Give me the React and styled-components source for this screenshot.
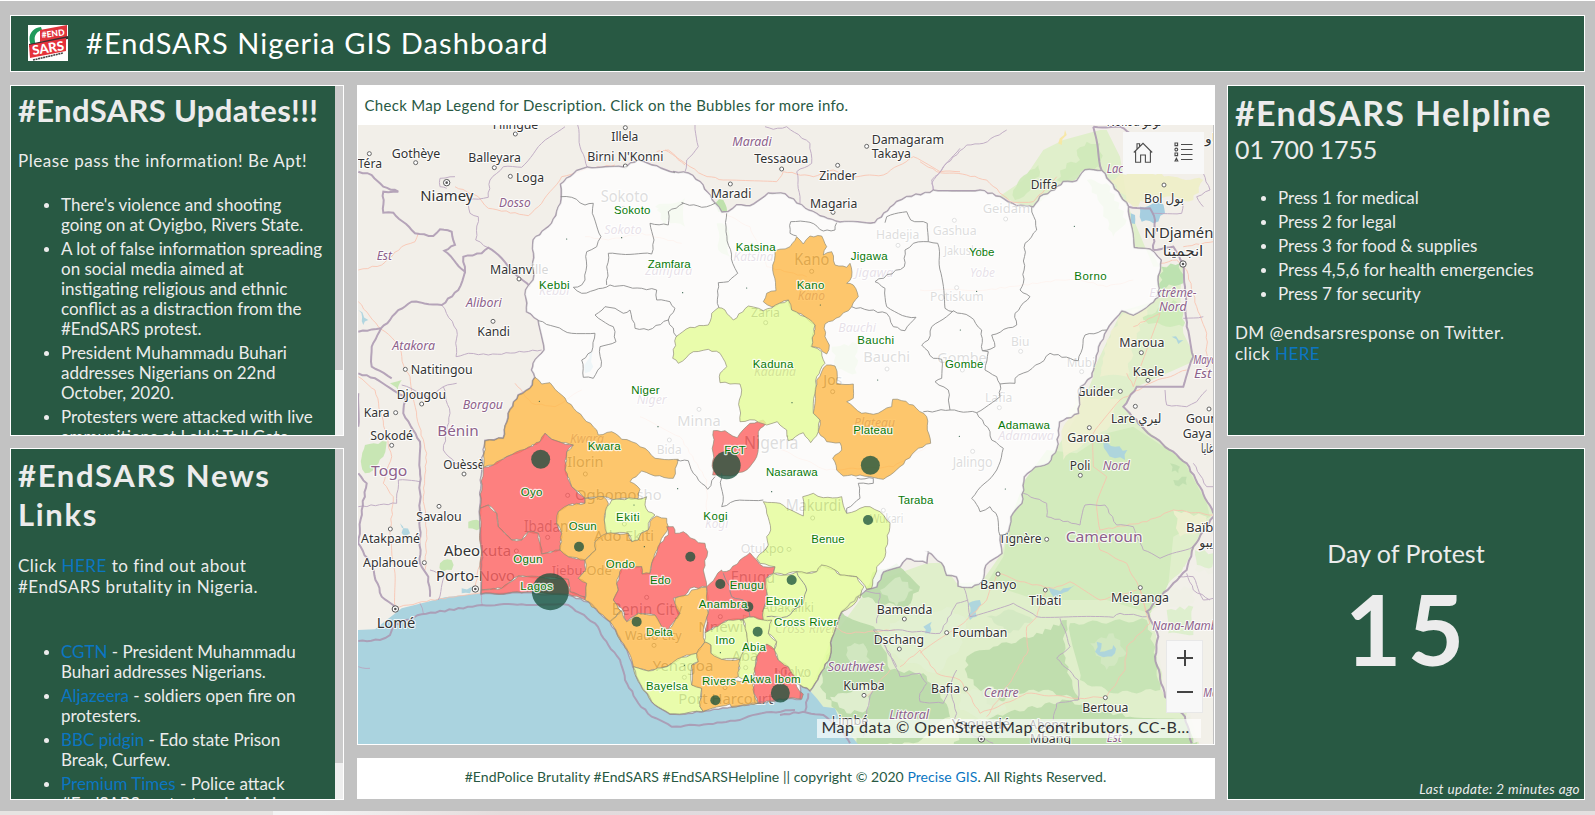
import React from "react";
import styled, { createGlobalStyle } from "styled-components";

const GlobalStyle = createGlobalStyle`
  *, *::before, *::after { box-sizing: border-box; }
  body { margin: 0; background: #c2c2c2; font-family: Lato, sans-serif; color: #ececec; }
`;

/* ---------- page frame ---------- */
const Page = styled.div`
  height: 815px;
  overflow: hidden;
  display: flex;
  flex-direction: column;
  gap: 13px;
  padding: 14px 10px 0;
  border-top: 1px solid #fff;
  background: #c2c2c2;
`;
const Header = styled.header`
  flex: 0 0 57px;
  display: flex;
  align-items: center;
  gap: 18px;
  padding: 0 0 2px 17px;
  background: #285943;
  border: 1px solid #fff;
`;
const Title = styled.h1`
  margin: 0;
  font-size: 29px;
  line-height: 36px;
  font-weight: 400;
  letter-spacing: 1.06px;
  color: #fff;
`;
const Columns = styled.main`
  display: grid;
  grid-template-columns: 334px 858px 358px;
  column-gap: 12.5px;
  height: 715px;
`;
const Column = styled.div`
  display: flex;
  flex-direction: column;
  gap: ${(p) => p.$gap || 12}px;
`;
const Panel = styled.section`
  flex: 0 0 ${(p) => p.$h}px;
  display: flex;
  overflow: hidden;
  background: #285943;
  border: 1px solid #fff;
`;
const Scroller = styled.div`
  flex: 1;
  min-width: 0;
  overflow: hidden;
  white-space: nowrap;
  padding: ${(p) => p.$top}px 0 0 7px;
`;
const Track = styled.div`
  flex: 0 0 8px;
  background: #eee;
`;
const Thumb = styled.div`
  height: ${(p) => p.$h}px;
  background: #cbcbcb;
`;
const Heading = styled.h2`
  margin: 0;
  font-size: ${(p) => p.$size || 31}px;
  line-height: ${(p) => p.$line || 38}px;
  letter-spacing: ${(p) => p.$track || 0}px;
  font-weight: 700;
  color: #ececec;
`;
const Phone = styled.div`
  margin-top: 1px;
  font-size: 25px;
  line-height: 30px;
  letter-spacing: -0.1px;
`;
const Text = styled.p`
  margin: ${(p) => p.$gap}px 0 0;
  font-size: 17px;
  line-height: 21px;
  letter-spacing: ${(p) => p.$track || 0.5}px;
`;
const List = styled.ul`
  margin: ${(p) => p.$gap}px 0 0;
  padding: 0 0 0 43px;
  list-style: none;
`;
const Item = styled.li`
  position: relative;
  margin-bottom: 4px;
  font-size: 17px;
  line-height: 20px;
  &::before {
    content: "";
    position: absolute;
    left: -17px;
    top: 8px;
    width: 5px;
    height: 5px;
    border-radius: 50%;
    background: #ececec;
  }
`;
const Link = styled.a`
  color: #0b76c2;
`;

/* ---------- counter ---------- */
const Counter = styled.div`
  flex: 1;
  display: flex;
  flex-direction: column;
  align-items: center;
  padding: 89px 0 1px;
`;
const CounterLabel = styled.div`
  font-size: 25px;
  line-height: 30px;
`;
const CounterValue = styled.div`
  margin-top: 12px;
  padding-left: 3px;
  font-size: 98px;
  line-height: 96px;
  font-weight: 700;
  letter-spacing: 6px;
`;
const Updated = styled.div`
  margin-top: auto;
  align-self: flex-end;
  padding-right: 4px;
  font-size: 13.5px;
  line-height: 18px;
  font-style: italic;
  letter-spacing: 0.36px;
`;

/* ---------- map card ---------- */
const MapCard = styled.section`
  flex: 0 0 660px;
  display: flex;
  flex-direction: column;
  background: #fff;
  padding: 0 1px 1px;
`;
const MapCaption = styled.div`
  flex: 0 0 40px;
  padding: 11px 0 0 7px;
  font-size: 15px;
  line-height: 18px;
  letter-spacing: 0.3px;
  color: #285943;
`;
const MapView = styled.div`
  position: relative;
  flex: 1;
  overflow: hidden;
  border-right: 1px solid #c2c2c2;
`;
const Tools = styled.div`
  position: absolute;
  top: 7px;
  right: 9px;
  width: 81px;
  height: 42px;
  display: flex;
  padding-bottom: 2px;
  background: #f8f8f8;
`;
const Zoom = styled.div`
  position: absolute;
  top: 515px;
  right: 10px;
  width: 37px;
  height: 73px;
  display: flex;
  flex-direction: column;
  padding: 0 0 2px 1px;
  background: #f8f8f8;
  border: 1px solid #e8e8e8;
`;
const ToolButton = styled.button`
  flex: 1;
  display: flex;
  align-items: center;
  justify-content: center;
  padding: 0;
  border: 0;
  background: none;
`;
const Attribution = styled.div`
  position: absolute;
  left: 459px;
  top: 594px;
  width: 384px;
  height: 19px;
  padding-left: 5px;
  font-size: 16px;
  line-height: 16px;
  letter-spacing: 0.47px;
  white-space: nowrap;
  color: #323232;
  background: rgba(255, 255, 255, 0.67);
`;
const FooterCard = styled.footer`
  flex: 0 0 41px;
  text-align: center;
  background: #fff;
  font-size: 14px;
  line-height: 38px;
  letter-spacing: 0.06px;
  color: #285943;
`;
const TaskStrip = styled.div`
  flex: 0 0 4px;
  margin: -2px -10px 0;
  background: linear-gradient(90deg, #e6e4e2 0 273px, #f3f3f3 273px 318px, #e4dcdc 500px, #d6d8e2 1100px, #e4e0e0);
`;
const Drawing = styled.svg`
  display: block;
`;

/* ---------- map geometry: survey sheets at 3 units per pixel ---------- */
const SHEETS = {
  A: [355, 80], B: [640, 80], C: [920, 80],
  D: [355, 370], E: [640, 370], F: [920, 370],
  G: [355, 570], H: [780, 570],
};
const px = (sheet, u, v) => [SHEETS[sheet][0] + u / 3, SHEETS[sheet][1] + v / 3];

function trace(text, close) {
  let sheet = "A";
  const out = [];
  text.trim().split(/\s+/).forEach((token) => {
    if (SHEETS[token]) { sheet = token; return; }
    const [u, v] = token.split(",").map(Number);
    const [x, y] = px(sheet, u, v);
    out.push(`${x.toFixed(1)},${y.toFixed(1)}`);
  });
  return "M" + out.join("L") + (close ? "Z" : "");
}

/* adds small alternating kinks so that surveyed borders do not look ruled */
function rough(text, close, amount = 0.9) {
  const pts = trace(text, false).slice(1).split("L").map((p) => p.split(",").map(Number));
  if (close) pts.push(pts[0]);
  let d = `M${pts[0]}`;
  for (let i = 1; i < pts.length; i++) {
    const [ax, ay] = pts[i - 1];
    const [bx, by] = pts[i];
    const len = Math.hypot(bx - ax, by - ay);
    const n = Math.max(1, Math.round(len / 4.5));
    for (let k = 1; k < n; k++) {
      const t = k / n;
      const x = ax + (bx - ax) * t;
      const y = ay + (by - ay) * t;
      const j = Math.sin(x * 2.7 + y * 3.9) * amount;
      d += `L${(x - ((by - ay) / len) * j).toFixed(1)},${(y + ((bx - ax) / len) * j).toFixed(1)}`;
    }
    d += `L${bx},${by}`;
  }
  return d + (close ? "Z" : "");
}

const NIGERIA = `A 617,313 665,272 697,262 805,262 850,240 905,258 960,278 B 100,275 145,280 180,305 225,370 245,397 265,395 290,375 330,378 385,340 435,342 495,385 540,408 600,427 705,428 770,365 800,350 870,338
C 40,331 180,331 240,350 290,378 340,382 360,350 405,330 430,305 470,303 495,270 545,272 625,380 642,503 690,508 723,540 713,600 716,650 690,672 640,705 605,692 560,750 535,800 520,870
F 515,20 480,50 475,130 418,155 410,235 385,280 345,290 312,320 305,400 272,440 265,485 240,497 245,550 197,585 185,635 155,652 115,648 110,620 80,615 65,578 23,545
E 865,545 860,578 800,565 780,590 730,605 710,650 680,658 H 240,75 185,125 155,205 150,260 105,340 90,362 60,345 60,388 G 1300,385 1205,400 1130,410 1050,422 1000,430 945,432 890,395 850,330 820,250 795,205 765,155 700,95 640,75 500,68 378,72
D 378,600 382,550 375,410 380,290 390,212 445,205 460,130 490,75 525,55 540,22 530,0 A 535,850 568,810 550,720 515,695 512,630 535,600 535,480 590,430 617,370`;

const STATES = [
  ["orange", `D 390,212 445,205 460,130 490,75 525,55 540,22 560,42 585,38 620,75 665,125 725,180 730,195 770,185 800,208 830,215 870,235 900,265 970,268 955,325 900,318 860,303 825,335 855,358 850,385 770,388 745,380 690,385 650,350 630,300 635,245 655,225 620,218 590,208 570,190 555,215 510,238 455,260 415,285 385,292`],
  ["red", `D 385,292 415,285 455,260 510,238 555,215 570,190 590,208 620,218 655,225 635,245 630,300 650,350 690,385 690,400 640,405 610,425 605,460 620,490 615,540 560,552 550,490 520,485 500,510 470,510 430,470 425,430 400,405 375,415`],
  ["red", `D 375,415 400,405 425,430 430,470 470,510 500,510 520,485 550,490 560,552 615,540 640,560 690,570 692,600 670,625 695,640 690,685 645,665 640,628 490,618 460,640 440,655 378,660`],
  ["red", `D 378,660 440,655 460,640 490,618 640,628 645,665 690,680 690,690 640,672 500,668 378,672`],
  ["orange", `D 690,385 745,380 760,400 748,450 755,490 720,515 722,540 690,570 640,560 615,540 620,490 605,460 610,425 640,405 690,400`],
  ["lime", `D 770,390 835,385 850,387 875,380 870,405 880,425 900,435 880,460 880,480 858,490 850,510 830,515 820,490 755,490 748,450 755,410`],
  ["orange", `D 755,490 820,490 830,515 850,510 858,490 880,480 885,455 905,438 935,445 940,470 915,520 890,580 885,610 860,612 860,590 800,595 785,640 790,660 775,690 790,715 800,725 765,755 690,690 695,640 670,625 692,600 690,570 722,540 720,515`],
  ["red", `E 85,495 80,470 100,470 105,490 130,485 175,518 195,520 203,545 190,600 200,650 150,655 130,680 100,685 G 960,100 975,130 940,180 920,170 900,135 850,130 815,155 800,115 775,90 790,60 785,40 800,-5 860,-10 862,12 885,10 890,-20 915,-80`],
  ["orange", `G 800,122 815,155 850,130 900,135 920,170 940,180 975,130 960,100 960,85 1000,75 1010,60 1055,52 1060,130 1045,190 1050,215 1025,250 980,262 935,290 880,303 835,290 820,245 795,210 765,155`],
  ["lime", `G 835,290 880,303 935,290 980,262 1025,250 1030,275 1010,285 1010,345 1040,355 1035,410 1045,425 945,432 890,395 850,335`],
  ["orange", `G 1050,215 1068,225 1068,250 1100,268 1155,268 1150,320 1125,330 1195,335 1197,370 1210,400 1130,412 1125,402 1045,425 1035,410 1040,355 1010,345 1010,285 1030,275 1025,250`],
  ["lime", `G 1050,188 1100,160 1120,150 1165,148 1175,190 1180,230 1165,245 1155,268 1100,268 1068,250 1068,225 1048,215`],
  ["lime", `G 1165,148 1165,135 1200,140 1232,148 1250,150 1240,190 1265,215 1258,240 1235,222 1205,260 1195,335 1150,320 1155,268 1165,245 1180,230 1175,190`],
  ["red", `G 1205,260 1235,222 1260,240 1270,270 1300,290 1320,320 1325,350 1345,372 1340,388 1300,385 1210,400 1197,370 1195,335`],
  ["red", `E 200,650 245,600 247,605 270,600 300,570 330,548 350,570 370,590 405,590 400,610 378,625 382,690 370,720 370,750 340,740 300,750 G 1165,150 1120,150 1100,160 1050,188 1060,130 1055,52`],
  ["lime", `E 370,395 420,400 440,415 490,438 488,380 520,370 550,383 605,380 620,430 660,415 690,410 720,425 750,460 735,560 710,590 695,655 680,658 650,620 600,615 585,600 545,585 530,605 500,610 470,605 435,615 400,610 405,590 360,580 350,565 385,525 380,500 392,480 380,430`],
  ["lime", `E 400,610 435,615 470,605 500,610 530,605 545,585 585,600 600,615 650,620 672,650 660,685 H 235,80 220,105 185,125 155,205 150,260 105,340 90,362 60,345 50,340 G 1320,320 1300,290 1270,270 1258,240 1265,215 1240,190 1250,150 E 370,750 370,720 382,690 378,625`],
  ["red", `E 220,182 255,182 292,203 330,160 370,150 378,160 355,185 355,200 350,260 320,300 285,315 218,315`],
  ["orange", `E 530,30 B 545,875 560,855 585,858 592,890 E 590,40 640,42 640,85 620,95 665,130 700,133 755,110 758,88 785,92 820,105 860,140 862,180 872,220 835,235 780,290 730,328 660,315 610,318 590,300 578,265 605,240 600,218 560,215 535,185 540,150 520,130 525,70`],
  ["orange", `B 405,512 450,500 470,470 490,492 510,468 545,468 560,500 550,525 575,515 585,555 620,562 630,550 635,590 620,610 640,615 655,650 635,680 600,710 555,732 555,770 568,795 560,822 540,805 512,800 525,735 495,710 455,690 445,660 395,680 370,665 380,640 408,632 398,570`],
  ["lime", `B 235,683 255,690 280,720 325,678 370,692 445,660 455,690 495,710 525,735 515,800 545,815 555,850 530,890 E 525,70 520,130 540,150 535,185 512,218 490,188 445,212 440,180 412,155 380,165 345,150 300,155 298,90 305,60 300,42 240,38 238,20 B 240,880 260,860 240,820 205,808 160,815 115,850 98,835 108,770 150,742 205,735 215,700`],
];
const FILL = { orange: "#ffbc4c", red: "#ff6464", lime: "#e6ff9b" };

const STATE_LINES = [
  "A 617,350 650,352 690,375 715,370 712,400 738,470 725,500 695,515 690,600 680,615 655,622 680,640 720,630 765,615",
  "A 755,615 760,520 890,522 897,480 885,430 940,435 940,395 985,370 B 125,368 185,382 225,370",
  "A 765,615 860,625 905,630 905,660 945,665 960,685 940,720 880,750 840,745 825,690 805,700 780,685 750,680 720,705 775,740 783,785 735,800 738,860 715,895 685,892 680,840 710,815 720,760 650,760 600,740 550,722",
  "A 940,720 965,770",
  "B 260,400 258,455 278,550 293,580 265,605 235,608 232,670 237,683",
  "B 470,468 450,460 452,425 510,427 550,453 585,450 590,428",
  "B 735,428 740,410 800,395 812,420 862,430 865,485 820,490 795,510 793,560 705,605 735,625 740,680 800,710 828,712 795,752 760,740 740,700 635,680",
  "B 865,485 893,490 903,580 915,685 940,695",
  "C 100,692 150,710 185,750 187,812 205,815 195,870 230,890 F 240,42",
  "C 100,692 35,740 25,780 5,795 40,835 65,838 65,895 F 45,35 85,60 90,120 170,128",
  "C 335,382 350,450 315,490 310,610 300,630 330,650 285,700 290,735 215,765 225,800 187,812",
  "C 560,750 495,765 475,842 390,820 360,850 285,895 F 285,40 240,42",
  "F 240,42 240,80 170,128 210,185 215,210 250,235 230,300 155,385 180,425 210,410 228,430 240,497",
  "F 90,120 10,125",
  "E 620,430 620,415 660,385 655,340 700,340 700,325 650,325",
  "E 110,270 145,272 160,310 203,358 225,320",
  "E 245,310 243,350 250,380 245,410 285,392 370,390",
  "E 250,610 270,650 275,680 310,690 330,740",
  "E 470,605 500,660 490,700 440,740 380,740",
];

const SEA = `G 0,180 60,178 95,150 140,115 200,100 270,82 378,70 500,66 640,72 700,95 765,155 795,205 820,250 850,330 890,395 945,432 1050,422 1205,400 1300,384 H 60,388 60,345 90,362 110,385 130,410 165,415 175,440 200,480 240,530 G 0,540`;
const GREEN = `C 560,150 600,230 625,380 700,560 790,560 780,640 790,760 830,840 F 650,50 610,110 680,180 800,280 880,430 820,540 740,690 690,730 H 1110,125 1130,200 1150,330 1230,430 1260,530 210,530 120,400 90,362 155,205 260,62 E 690,640 F 20,580 65,578 110,640 185,635 245,550 265,485 305,400 345,290 410,235 475,130 520,20 C 520,870 605,692 700,665 720,560 690,508 642,503 625,380 545,272 495,270 430,305 405,330 340,382 290,370 240,348 310,300 370,210 430,180 540,150`;
const NORD = `F 315,330 380,240 470,250 560,190 640,170 700,210 790,270 860,400 870,440 760,500 740,690 690,730 560,690 350,690 200,640 250,560 270,450`;
const BLOBS = [
  ["#cfe9b9", "C 280,330 330,270 355,255 360,275 320,340 285,360"],
  ["#cfe9b9", "C 410,300 440,250 480,240 470,210 500,185 540,190 545,265 495,268 465,300"],
  ["#f7e7a0", "C 415,190 435,150 440,165 425,195"],
  ["#eeeec6", "C 570,300 640,270 760,290 850,300 820,360 700,350 640,380"],
  ["#9dcadf", "C 660,380 720,365 735,400 700,430 665,425"],
  ["#9dcadf", "C 632,400 645,405 645,432 634,430"],
  ["#b9e0ad", "C 725,560 780,550 790,610 720,625"],
  ["#cdeab8", "C 660,720 760,660 790,690 790,740 700,730"],
  ["#eef0cf", "C 610,700 690,680 650,760 620,890 540,890 560,780"],
  ["#eef0cf", "F 480,60 600,90 560,180 470,240 430,270 430,170"],
  ["#eef0cf", "F 760,420 860,440 850,480 780,500"],
  ["#aad3df", "F 550,220 585,230 622,240 615,270 585,265 560,245"],
  ["#aad3df", "F 385,650 410,660 430,655 465,645 430,668 400,680 390,665"],
  ["#aad3df", "C 755,770 790,780 775,792"],
  ["#bfdfae", "F 750,280 780,290 775,310 755,305"],
  ["#bfdfae", "F 760,330 800,320 800,345 765,345"],
  ["#dceecb", "F 825,540 880,550 880,610 825,600"],
  ["#dceecb", "F 740,660 820,650 820,700 740,720"],
  ["#b9d9a9", "H 185,125 290,180 320,250 330,300 430,310 480,370 510,440 400,520 240,530 180,440 120,350 150,230"],
  ["#b9d9a9", "H 290,0 350,-20 420,50 380,110 300,100 240,75"],
  ["#bcdcab", "H 560,260 640,230 760,200 860,150 850,250 870,320 900,390 790,360 690,370 640,420 560,310"],
  ["#bcdcab", "H 680,430 860,390 950,420 1050,440 1230,440 1250,530 520,530 560,460"],
  ["#c4e2b2", "H 870,160 1100,150 1130,260 1140,360 1000,370 900,330"],
  ["#d3e8c2", "H 300,60 360,20 400,60 350,110"],
  ["#d3e8c2", "H 200,230 250,220 270,270 210,290"],
  ["#d3e8c2", "H 620,140 700,120 760,150 690,190"],
  ["#d3e8c2", "H 930,220 1000,190 1040,250 980,300"],
  ["#e2efd2", "H 330,160 500,110 560,150 540,230 470,310 370,270 330,250"],
  ["#e2efd2", "H 200,370 280,340 260,420 200,430 150,380"],
  ["#e2efd2", "H 540,370 640,350 680,420 600,450 540,420"],
  ["#aad3df", "H 565,100 600,90 590,140 570,150"],
  ["#aad3df", "H 430,170 455,155 450,190 435,190"],
  ["#aad3df", "H 950,215 965,220 960,245 985,240 1000,225 1005,250 970,262 945,245"],
  ["#f2efe9", "H 1115,120 1210,-10 1300,-10 1300,520 1240,520 1220,430 1155,380 1130,260"],
  ["#dceecb", "H 1160,120 1240,110 1240,195 1165,190"],
  ["#c3e4ae", "D 30,225 95,215 85,260 60,290 30,310 20,260"],
  ["#c3e4ae", "D 105,40 140,30 130,65"],
  ["#c3e4ae", "D 340,455 378,455 378,475 340,475"],
  ["#c3e4ae", "D 255,580 290,570 290,600 262,605"],
  ["#aad3df", "D 135,460 165,490 150,500"],
  ["#aad3df", "A 10,690 40,720 25,735"],
  ["#aad3df", "D 320,655 350,650 345,670 320,670"],
  ["#cfe9b9", "A 900,380 990,355 990,440 945,430"],
  ["#cfe9b9", "B 50,390 88,380 80,440"],
  ["#b9dfa6", "B 215,365 250,360 262,395 235,395"],
  ["#cfe9b9", "B 230,430 260,440 270,530 235,510"],
  ["#cfe9b9", "C 500,300 560,310 620,420 580,470 540,370"],
  ["#aad3df", "A 700,820 712,815 715,860 690,880"],
  ["#cfe9b9", "B 575,800 650,790 650,880 590,870"],
];
const COUNTRY_BORDERS = [
  "A 10,275 50,285 85,320 130,335 85,335 85,398 115,398 180,460 235,468 255,448 290,455 300,495 268,512 330,575 325,530 380,520 400,503 440,535 460,560 525,620",
  "A 330,575 310,630 260,675 170,665 130,690 105,720 78,745 10,755",
  "A 78,745 50,800 50,860 110,895",
  "D 10,10 60,25 150,80 145,130 195,215 195,300 195,580 220,620 225,680",
  "D 10,70 10,170", "D 10,310 35,340 20,420 10,520 50,590 80,680 130,720",
  "G 10,213 75,210 105,195 118,165", "G 118,165 200,133 380,105 500,103 640,105 720,160 760,225 795,270 810,330 850,400 890,440 950,470 1060,462 1140,452 1220,430 1320,420",
  "H 0,435 70,425 130,435 180,470 210,520", "H 75,425 85,370",
  "C 520,140 545,272 625,380 690,385 705,420 700,510", "C 520,140 600,140 630,160",
  "C 700,510 760,500 790,550 795,620 800,740 820,830 F 790,50 650,50 610,110 675,180 800,280 840,350 880,430",
  "F 880,440 820,530 800,600 760,640 680,725 H 1105,130 1135,200 1125,260 1155,380 1215,440 1235,520",
  NIGERIA,
];
const REGION_BORDERS = [
  "A 300,290 255,295 255,320 275,325", "A 400,352 405,300 445,260 500,262 560,190 630,140", "A 400,352 340,360 345,400 370,410 362,480 400,503",
  "A 668,135 675,200 697,262", "B 165,135 175,200 140,240 135,275", "B 375,140 400,148 440,140 510,190 515,250 470,275 480,350 480,370",
  "B 960,205 905,270 875,300 880,330", "C 260,150 190,190 140,195 70,260 35,310 40,331",
  "A 260,675 305,750 303,830 340,820 400,825 560,810", "D 140,45 220,80 265,50 305,40", "D 265,50 285,130 265,240 300,280 380,285",
  "D 195,335 130,330 125,400 10,410", "D 225,600 270,615 250,690", "G 195,100 205,130", "G 378,70 382,105",
  "F 310,370 380,400 380,440 480,465 495,405 555,405 590,465 640,470 670,540 720,565 820,530",
  "F 350,740 580,742 600,730 680,740", "F 350,740 280,700 150,740 145,700 130,650", "F 735,60 740,105 800,110 830,95 860,60",
  "F 820,280 860,350 880,350", "F 775,620 820,620 850,690 880,685", "C 700,400 785,400 790,370", "C 850,280 870,330 830,350 850,380",
  "C 850,710 790,715", "H 565,90 530,100 480,190 410,185 340,180 280,180 330,250 360,320 420,310 440,340 420,370 420,395 490,400 530,300",
  "H 840,145 870,230 830,265 895,330 895,390 830,400 820,450", "H 510,360 530,430 520,470 640,520",
  "H 280,350 260,420 250,500", "H 290,190 350,290", "H 240,60 300,70 290,160", "H 1220,10 1240,60 1290,90", "D 45,895 10,890",
];
const ROADS = [
  "A 300,320 370,350 400,385 520,407 560,370 620,290 690,268 780,255", "B 75,210 150,260 190,285 250,300 410,305 430,275 520,290 580,270 620,290 730,285 820,230 900,275 960,275",
  "A 10,570 80,555 140,500 180,485 190,460", "A 10,665 70,740 130,790 150,870 D 165,20 185,140 215,250 205,380 215,480 210,600",
  "C 0,245 50,275 140,285 200,300 270,365 340,365 410,290", "A 905,215 940,210 990,255", "D 10,20 60,60 90,180 110,260 85,340 115,380 105,500 120,610 120,710",
  "G 120,115 200,95 378,68", "C 720,550 770,540 800,570 830,680 860,760 860,890", "C 790,500 880,485", "F 880,435 760,420 680,455 540,480 530,400 560,320 520,290 520,190 600,90 690,40 800,0",
  "F 530,480 540,540 620,580 660,660 680,730", "F 235,610 300,635 400,655 450,635 540,690 650,660", "H 420,250 560,150 620,90 650,15",
  "H 345,180 200,190 160,170", "H 360,290 420,240 470,310 540,330 600,430 690,395 740,370 900,385 980,380 1035,300 1040,230 1110,160 1080,60", "H 800,60 770,140 740,170 745,240 700,320 620,440",
  "H 260,380 330,300", "C 640,740 720,700 F 640,50 620,10", "D 378,400 378,560 360,650", "D 480,40 530,100 600,110 680,60",
  "B 250,400 330,440 380,560 500,590", "C 0,630 200,630 420,600 480,600 560,620 640,600", "A 690,470 760,480 860,460 980,490", "E 0,140 120,200 200,330 200,450", "E 380,220 560,300 760,290 860,230",
];

/* [sheet, left, right, baseline, text, font size] */
const TOWNS = [
  ["A", 413, 550, 148, "Filingué", 13], ["A", 110, 256, 233, "Gothèye", 13], ["A", 8, 81, 265, "Téra", 13], ["A", 340, 498, 245, "Balleyara", 13],
  ["A", 483, 567, 305, "Loga", 13], ["A", 196, 355, 363, "Niamey", 15], ["A", 769, 850, 183, "Illela", 13], ["A", 697, 925, 244, "Birni N'Konni", 13],
  ["A", 405, 580, 582, "Malanville", 13], ["A", 367, 465, 768, "Kandi", 13], ["A", 167, 353, 882, "Natitingou", 13],
  ["B", 343, 505, 250, "Tessaoua", 13], ["B", 538, 650, 300, "Zinder", 13], ["B", 212, 334, 354, "Maradi", 13], ["B", 510, 652, 384, "Magaria", 13],
  ["B", 695, 912, 191, "Damagaram", 13], ["B", 695, 813, 235, "Takaya", 13], ["C", 332, 412, 328, "Diffa", 13], ["C", 560, 725, 138, "Nokou نوكو", 13],
  ["C", 672, 792, 369, "Bol بول", 13], ["C", 673, 905, 473, "N'Djaména", 15], ["C", 728, 850, 528, "انجمينا", 14], ["C", 855, 910, 190, "ماو", 13],
  ["C", 598, 733, 801, "Maroua", 13], ["C", 638, 733, 887, "Kaele", 13],
  ["D", 125, 273, 87, "Djougou", 13], ["D", 26, 104, 142, "Kara", 13], ["D", 46, 174, 211, "Sokodé", 13], ["D", 265, 388, 296, "Ouèssè", 13],
  ["D", 184, 320, 453, "Savalou", 13], ["D", 18, 195, 520, "Atakpamé", 13], ["D", 24, 190, 592, "Aplahoué", 13], ["D", 267, 468, 559, "Abeokuta", 15],
  ["D", 243, 480, 632, "Porto-Novo", 15], ["D", 65, 181, 775, "Lomé", 15],
  ["F", 470, 585, 77, "Guider", 13], ["F", 442, 570, 215, "Garoua", 13], ["F", 449, 511, 300, "Poli", 13], ["F", 573, 724, 158, "Lare ليري", 13],
  ["F", 797, 940, 158, "Gounou", 13], ["F", 788, 875, 203, "Gaya", 13], ["F", 843, 935, 250, "غونو غايا", 13], ["F", 798, 925, 485, "Baïbok", 13], ["F", 838, 900, 530, "بايبو", 13],
  ["F", 237, 364, 519, "Tignère", 13], ["F", 180, 290, 656, "Banyo", 13], ["F", 327, 424, 704, "Tibati", 13], ["F", 573, 747, 696, "Meiganga", 13],
  ["H", 290, 457, 133, "Bamenda", 13], ["H", 281, 432, 221, "Dschang", 13], ["H", 517, 682, 202, "Foumban", 13], ["H", 190, 314, 360, "Kumba", 13],
  ["H", 453, 540, 370, "Bafia", 13], ["H", 907, 1045, 426, "Bertoua", 13], ["H", 515, 690, 478, "Yaoundé", 15], ["H", 750, 873, 519, "Mbang", 13], ["H", 748, 870, 476, "Abong-", 13], ["H", 155, 265, 466, "Limbé", 13],
];
/* towns that lie under the state shading */
const INNER = [
  ["A", 737, 880, 367, "Sokoto", 16], ["B", 708, 838, 478, "Hadejia", 13], ["B", 463, 568, 556, "Kano", 16], ["B", 333, 420, 711, "Zaria", 13],
  ["B", 670, 810, 846, "Bauchi", 15], ["C", 38, 170, 464, "Gashua", 13], ["C", 188, 330, 400, "Geidam", 13], ["C", 72, 190, 525, "Jakusko", 13], ["C", 30, 191, 664, "Potiskum", 13],
  ["C", 52, 200, 850, "Gombe", 15], ["C", 273, 328, 799, "Biu", 13], ["C", 440, 525, 860, "Mubi", 13], ["E", 112, 242, 167, "Minna", 15], ["E", 50, 125, 253, "Bida", 13],
  ["D", 637, 745, 290, "Ilorin", 15], ["D", 660, 920, 389, "Ogbomosho", 15], ["D", 507, 640, 485, "Ibadan", 16], ["D", 717, 897, 514, "Ado Ekiti", 15], ["D", 590, 770, 616, "Ijebu-Ode", 13],
  ["D", 770, 982, 735, "Benin City", 16], ["E", 550, 607, 45, "Jos", 15], ["E", 312, 475, 238, "Nigeria", 18], ["E", 437, 604, 424, "Makurdi", 16], ["E", 690, 790, 459, "Wukari", 13], ["E", 302, 432, 550, "Otukpo", 13],
  ["E", 272, 405, 640, "Enugu", 16], ["E", 365, 522, 727, "Abakaliki", 13], ["G", 1030, 1165, 187, "Nnewi", 15], ["G", 810, 980, 209, "Wado city", 13], ["G", 893, 1075, 302, "Yenagoa", 15],
  ["G", 970, 1255, 402, "Port Harcourt", 15], ["G", 1130, 1210, 273, "Aba", 15], ["G", 1255, 1370, 320, "Uyo", 13], ["H", 0, 93, 321, "Calvo", 15], ["F", 195, 277, 95, "Lafia", 13], ["F", 98, 218, 292, "Jalingo", 14],
];
const REGIONS = [
  ["A", 432, 527, 382, "Dosso"], ["A", 65, 111, 541, "Est"], ["A", 333, 440, 680, "Alibori"], ["A", 112, 240, 809, "Atakora"], ["B", 277, 395, 197, "Maradi"],
  ["C", 560, 610, 280, "Lac"], ["C", 688, 830, 650, "Extrême-"], ["C", 717, 800, 694, "Nord"], ["C", 820, 890, 853, "Mayo"], ["C", 822, 875, 893, "Est"],
  ["D", 323, 444, 117, "Borgou"], ["F", 548, 629, 300, "Nord"], ["H", 1117, 1330, 181, "Nana-Mambé"], ["H", 143, 312, 302, "Southwest"], ["H", 328, 447, 447, "Littoral"], ["H", 611, 716, 380, "Centre"], ["H", 980, 1025, 515, "Est"], ["H", 1270, 1340, 381, "Mam"],
];
const INNER_REGIONS = [
  ["A", 748, 860, 463, "Sokoto"], ["A", 552, 643, 645, "Kebbi"], ["B", 15, 157, 585, "Zamfara"], ["B", 280, 400, 543, "Katsina"], ["B", 645, 760, 592, "Jigawa"], ["B", 473, 555, 659, "Kano"],
  ["B", 595, 708, 756, "Bauchi"], ["B", 342, 468, 888, "Kaduna"], ["C", 150, 225, 590, "Yobe"], ["D", 645, 747, 220, "Kwara"], ["D", 845, 935, 102, "Niger"], ["E", 642, 765, 170, "Plateau"],
  ["E", 195, 265, 473, "Kogi"], ["F", 235, 402, 209, "Adamawa"], ["E", 405, 590, 790, "Cross River"],
];
const COUNTRIES = [["D", 247, 371, 199, "Bénin"], ["D", 48, 157, 319, "Togo"], ["F", 437, 668, 516, "Cameroun"]];

const STATE_LABELS = [
  ["A", 777, 886, 402, "Sokoto"], ["A", 878, 1007, 565, "Zamfara"], ["A", 552, 644, 627, "Kebbi"], ["B", 287, 407, 514, "Katsina"], ["B", 632, 743, 540, "Jigawa"], ["B", 470, 553, 627, "Kano"],
  ["B", 652, 762, 792, "Bauchi"], ["B", 338, 460, 864, "Kaduna"], ["C", 147, 223, 528, "Yobe"], ["C", 463, 560, 600, "Borno"], ["C", 75, 190, 864, "Gombe"],
  ["D", 829, 914, 73, "Niger"], ["D", 698, 797, 240, "Kwara"], ["D", 497, 562, 379, "Oyo"], ["D", 641, 725, 480, "Osun"], ["D", 783, 854, 453, "Ekiti"], ["D", 475, 562, 579, "Ogun"], ["D", 752, 840, 594, "Ondo"],
  ["D", 885, 947, 642, "Edo"], ["D", 496, 593, 660, "Lagos"], ["E", 253, 317, 252, "FCT"], ["E", 640, 759, 192, "Plateau"], ["E", 378, 533, 318, "Nasarawa"], ["E", 190, 263, 450, "Kogi"], ["E", 514, 614, 519, "Benue"],
  ["E", 774, 880, 402, "Taraba"], ["F", 234, 390, 177, "Adamawa"], ["E", 269, 371, 657, "Enugu"], ["E", 176, 322, 714, "Anambra"], ["E", 377, 489, 705, "Ebonyi"], ["E", 402, 592, 768, "Cross River"],
  ["G", 873, 953, 198, "Delta"], ["G", 1081, 1140, 222, "Imo"], ["G", 1161, 1233, 243, "Abia"], ["G", 873, 999, 360, "Bayelsa"], ["G", 1041, 1143, 345, "Rivers"], ["G", 1161, 1337, 339, "Akwa Ibom"],
];
const BUBBLES = [
  ["D", 557, 268, 9.5], ["D", 672, 530, 5], ["D", 586, 665, 18.5], ["G", 845, 155, 5], ["G", 1096, 42, 5], ["G", 1180, 110, 5], ["G", 1208, 185, 5],
  ["G", 1276, 369, 9.5], ["G", 1081, 391, 5], ["E", 260, 286, 14], ["E", 691, 286, 9.5], ["E", 684, 450, 5], ["E", 151, 560, 5], ["E", 455, 630, 5],
];
const TOWN_DOTS = [
  ["A", 481, 162], ["A", 43, 221], ["A", 182, 248], ["A", 418, 263], ["A", 466, 289], ["A", 811, 143], ["A", 811, 258], ["A", 492, 597], ["A", 414, 724], ["A", 151, 868], ["B", 425, 267], ["B", 593, 256], ["B", 271, 312],
  ["B", 579, 397], ["B", 680, 199], ["C", 732, 315], ["C", 664, 818], ["D", 200, 102], ["D", 122, 128], ["D", 110, 226], ["D", 327, 312], ["D", 252, 409], ["D", 106, 477], ["D", 208, 578], ["F", 684, 31], ["F", 601, 64],
  ["F", 646, 109], ["F", 508, 173], ["F", 481, 316], ["F", 867, 117], ["F", 380, 508], ["F", 234, 612], ["F", 376, 660], ["F", 661, 653], ["H", 373, 147], ["H", 358, 237], ["H", 500, 188], ["H", 252, 376], ["H", 557, 357], ["H", 976, 383],
];
const INNER_DOTS = [
  ["B", 774, 496], ["B", 515, 574], ["B", 377, 728], ["B", 741, 867], ["C", 103, 421], ["C", 257, 417], ["C", 110, 623], ["C", 127, 870], ["C", 302, 814], ["C", 485, 875], ["E", 177, 118], ["E", 88, 210], ["D", 691, 312], ["D", 638, 376],
  ["D", 578, 502], ["D", 808, 462], ["D", 484, 543], ["D", 875, 682], ["E", 578, 65], ["E", 518, 444], ["E", 730, 421], ["E", 447, 538], ["F", 238, 113], ["F", 158, 244], ["G", 1096, 140], ["G", 988, 322], ["G", 897, 226], ["G", 1110, 353], ["G", 1172, 293], ["G", 1268, 307], ["A", 805, 385],
];
const CAPITALS = [["A", 275, 308], ["C", 789, 552], ["D", 361, 657], ["D", 121, 717], ["H", 604, 507]];
const CENTRES = [["A", 635, 477], ["A", 800, 473], ["B", 128, 638], ["B", 320, 624], ["B", 541, 675], ["C", 463, 439], ["C", 170, 634], ["C", 121, 750], ["D", 553, 94], ["D", 837, 405], ["D", 868, 530], ["E", 456, 98], ["E", 713, 30], ["E", 395, 365], ["E", 113, 356], ["F", 118, 199], ["F", 256, 357], ["E", 54, 170], ["G", 1096, 248], ["G", 988, 286]];

function MapText({ at, size, color, italic, font = "Noto Sans", halo = 2.2, adjust = "spacingAndGlyphs" }) {
  const [sheet, left, right, base, text, own] = at;
  const [x, y] = px(sheet, left, base);
  return (
    <text x={x} y={y} textLength={(right - left) / 3} lengthAdjust={adjust} fontFamily={`"${font}", "DejaVu Sans", sans-serif`}
      fontSize={own || size} fontStyle={italic ? "italic" : "normal"} fill={color} stroke="#fff" strokeOpacity="0.8" strokeWidth={halo} strokeLinejoin="round" paintOrder="stroke">
      {text}
    </text>
  );
}
function Dot({ at }) {
  const [x, y] = px(...at);
  return <circle cx={x} cy={y} r="2" fill="#fff" stroke="#666" strokeWidth="1" />;
}

function NigeriaMap() {
  return (
    <Drawing width="855" height="619" viewBox="358 125 855 619">
      <defs>
        <mask id="plain-states" maskUnits="userSpaceOnUse" x="358" y="125" width="855" height="619">
          <path d={rough(NIGERIA, true)} fill="#fff" />
          {STATES.map(([, d], i) => <path key={i} d={rough(d, true)} fill="#000" />)}
        </mask>
      </defs>
      <rect x="358" y="125" width="855" height="619" fill="#f2efe9" />
      <path d={trace(GREEN, true)} fill="#e0efcb" />
      <path d={trace(NORD, true)} fill="#d3ebbd" />
      {BLOBS.map(([fill, d], i) => <path key={i} d={rough(d, true, 2)} fill={fill} opacity="0.9" />)}
      <path d={trace(SEA, true)} fill="#aad3df" />
      <g fill="none" stroke="#fac0ac" strokeWidth="0.8">{ROADS.map((d, i) => <path key={i} d={rough(d, false, 0.7)} />)}</g>
      <g fill="none" stroke="#b9a3bf" strokeWidth="1" opacity="0.85">{REGION_BORDERS.map((d, i) => <path key={i} d={rough(d, false, 0.7)} />)}</g>
      <g fill="none" stroke="#ab97b1" strokeWidth="2" opacity="0.85">{COUNTRY_BORDERS.map((d, i) => <path key={i} d={rough(d, d === NIGERIA, 0.7)} />)}</g>
      {INNER_DOTS.map((d, i) => <Dot key={i} at={d} />)}
      {TOWN_DOTS.map((d, i) => <Dot key={i} at={d} />)}
      {CAPITALS.map((c, i) => {
        const [x, y] = px(...c);
        return <g key={i}><circle cx={x} cy={y} r="3.2" fill="#fff" stroke="#555" /><circle cx={x} cy={y} r="1.3" fill="#555" /></g>;
      })}
      {INNER_REGIONS.map((t) => <MapText key={t[4]} at={t} size={13} color="#8a6a90" italic />)}
      {INNER.map((t) => <MapText key={t[4]} at={t} size={13} color="#555" />)}
      {TOWNS.map((t) => <MapText key={t[4]} at={t} size={13} color="#333" />)}
      {REGIONS.map((t, i) => <MapText key={i} at={t} size={13} color="#8d618b" italic />)}
      {COUNTRIES.map((t) => <MapText key={t[4]} at={t} size={15} color="#8d618b" />)}
      <rect x="358" y="125" width="855" height="619" fill="#fff" opacity="0.8" mask="url(#plain-states)" />
      {STATES.map(([kind, d], i) => <path key={i} d={rough(d, true)} fill={FILL[kind]} fillOpacity="0.8" stroke="#8f8a78" strokeOpacity="0.75" strokeWidth="0.9" />)}
      <g fill="none" stroke="#8e8e8e" strokeWidth="0.9">
        {STATE_LINES.map((d, i) => <path key={i} d={rough(d, false)} />)}
        <path d={rough(NIGERIA, true)} opacity="0.6" />
      </g>
      {CENTRES.map((c, i) => {
        const [x, y] = px(...c);
        return <circle key={i} cx={x} cy={y} r="0.6" fill="#285943" />;
      })}
      {BUBBLES.map(([s, u, v, r], i) => {
        const [x, y] = px(s, u, v);
        return <circle key={i} cx={x} cy={y} r={r} fill="#18503b" fillOpacity="0.76" />;
      })}
      {STATE_LABELS.map((t) => <MapText key={t[4]} at={t} size={11.5} color="#087808" font="Liberation Sans" halo={2.4} adjust="spacing" />)}
    </Drawing>
  );
}

function Logo() {
  return (
    <Drawing width="40" height="36" viewBox="0 0 40 36">
      <rect width="40" height="36" fill="#fff" />
      <path d="M13 2C3 3-1 12 3 20h5C5 13 7 7 14 5Z" fill="#1f9a5b" />
      <path d="M12 5 39 0v13L12 17Z" fill="#e0343c" />
      <path d="M1 19 40 11v3L1 22Z" fill="#3a3030" />
      <path d="M1 20 38 13v13L2 33Z" fill="#e5323b" />
      <path d="M5 35 35 28" stroke="#444" strokeWidth="1.6" strokeDasharray="2 .6" />
      <g fill="#fff" fontFamily="Lato, sans-serif" fontWeight="900">
        <text x="14" y="13" fontSize="8.5" textLength="23" transform="rotate(-7 14 13)">#END</text>
        <text x="5" y="30" fontSize="13" textLength="32" lengthAdjust="spacingAndGlyphs" transform="rotate(-9 5 30)">SARS</text>
      </g>
    </Drawing>
  );
}

const HomeIcon = () => (
  <Drawing width="20" height="21" viewBox="0 0 20 21" fill="none" stroke="#4c4c4c" strokeWidth="1.1">
    <path d="M.8 10.5 10 1.3l9.2 9.2M2.6 9v11.2h5V13h4.8v7.2h5V9M4 7V1.8h2.6v2.6" />
  </Drawing>
);
const LegendIcon = () => (
  <Drawing width="19" height="20" viewBox="0 0 19 20" fill="none" stroke="#4c4c4c" strokeWidth="1.1">
    <path d="M7 2.5h11.5M7 7.5h11.5M7 12.5h11.5M7 17.5h11.5" />
    <path d="M1 1h2.6v2.6H1ZM1 11h2.6v2.6H1ZM1 19l1.4-2.8L3.8 19Z" />
    <circle cx="2.3" cy="7.5" r="1.4" />
  </Drawing>
);
const PlusIcon = () => (
  <Drawing width="16" height="16" viewBox="0 0 16 16" stroke="#444" strokeWidth="2"><path d="M0 8h16M8 0v16" /></Drawing>
);
const MinusIcon = () => (
  <Drawing width="16" height="16" viewBox="0 0 16 16" stroke="#444" strokeWidth="2"><path d="M0 7h16" /></Drawing>
);

export default function App() {
  return (
    <Page>
      <GlobalStyle />
      <Header>
        <Logo />
        <Title>#EndSARS Nigeria GIS Dashboard</Title>
      </Header>
      <Columns>
        <Column>
          <Panel $h={351}>
            <Scroller $top={5}>
              <Heading $track={0.33}>#EndSARS Updates!!!</Heading>
              <Text $gap={21} $track={0.56}>Please pass the information! Be Apt!</Text>
              <List $gap={24}>
                <Item>There's violence and shooting<br />going on at Oyigbo, Rivers State.</Item>
                <Item>A lot of false information spreading<br />on social media aimed at<br />instigating religious and ethnic<br />conflict as a distraction from the<br />#EndSARS protest.</Item>
                <Item>President Muhammadu Buhari<br />addresses Nigerians on 22nd<br />October, 2020.</Item>
                <Item>Protesters were attacked with live<br />ammunitions at Lekki Toll Gate</Item>
              </List>
            </Scroller>
            <Track><Thumb $h={284} /></Track>
          </Panel>
          <Panel $h={352}>
            <Scroller $top={7}>
              <Heading $line={39} $track={1.65}>#EndSARS News<br />Links</Heading>
              <Text $gap={21}>Click <Link>HERE</Link> to find out about<br />#EndSARS brutality in Nigeria.</Text>
              <List $gap={45}>
                <Item><Link>CGTN</Link> - President Muhammadu<br />Buhari addresses Nigerians.</Item>
                <Item><Link>Aljazeera</Link> - soldiers open fire on<br />protesters.</Item>
                <Item><Link>BBC pidgin</Link> - Edo state Prison<br />Break, Curfew.</Item>
                <Item><Link>Premium Times</Link> - Police attack<br />#EndSARS protesters in Abuja.</Item>
              </List>
            </Scroller>
            <Track><Thumb $h={314} /></Track>
          </Panel>
        </Column>
        <Column $gap={13}>
          <MapCard>
            <MapCaption>Check Map Legend for Description. Click on the Bubbles for more info.</MapCaption>
            <MapView>
              <NigeriaMap />
              <Tools>
                <ToolButton aria-label="Home"><HomeIcon /></ToolButton>
                <ToolButton aria-label="Legend"><LegendIcon /></ToolButton>
              </Tools>
              <Zoom>
                <ToolButton aria-label="Zoom in"><PlusIcon /></ToolButton>
                <ToolButton aria-label="Zoom out"><MinusIcon /></ToolButton>
              </Zoom>
              <Attribution>Map data © OpenStreetMap contributors, CC-B…</Attribution>
            </MapView>
          </MapCard>
          <FooterCard>
            #EndPolice Brutality #EndSARS #EndSARSHelpline || copyright © 2020 <Link>Precise GIS</Link>. All Rights Reserved.
          </FooterCard>
        </Column>
        <Column>
          <Panel $h={351}>
            <Scroller $top={6}>
              <Heading $size={34} $line={41} $track={1.35}>#EndSARS Helpline</Heading>
              <Phone>01 700 1755</Phone>
              <List $gap={24}>
                <Item>Press 1 for medical</Item>
                <Item>Press 2 for legal</Item>
                <Item>Press 3 for food &amp; supplies</Item>
                <Item>Press 4,5,6 for health emergencies</Item>
                <Item>Press 7 for security</Item>
              </List>
              <Text $gap={18} $track={0.44}>DM @endsarsresponse on Twitter.<br />click <Link>HERE</Link></Text>
            </Scroller>
          </Panel>
          <Panel $h={352}>
            <Counter>
              <CounterLabel>Day of Protest</CounterLabel>
              <CounterValue>15</CounterValue>
              <Updated>Last update: 2 minutes ago</Updated>
            </Counter>
          </Panel>
        </Column>
      </Columns>
      <TaskStrip />
    </Page>
  );
}
